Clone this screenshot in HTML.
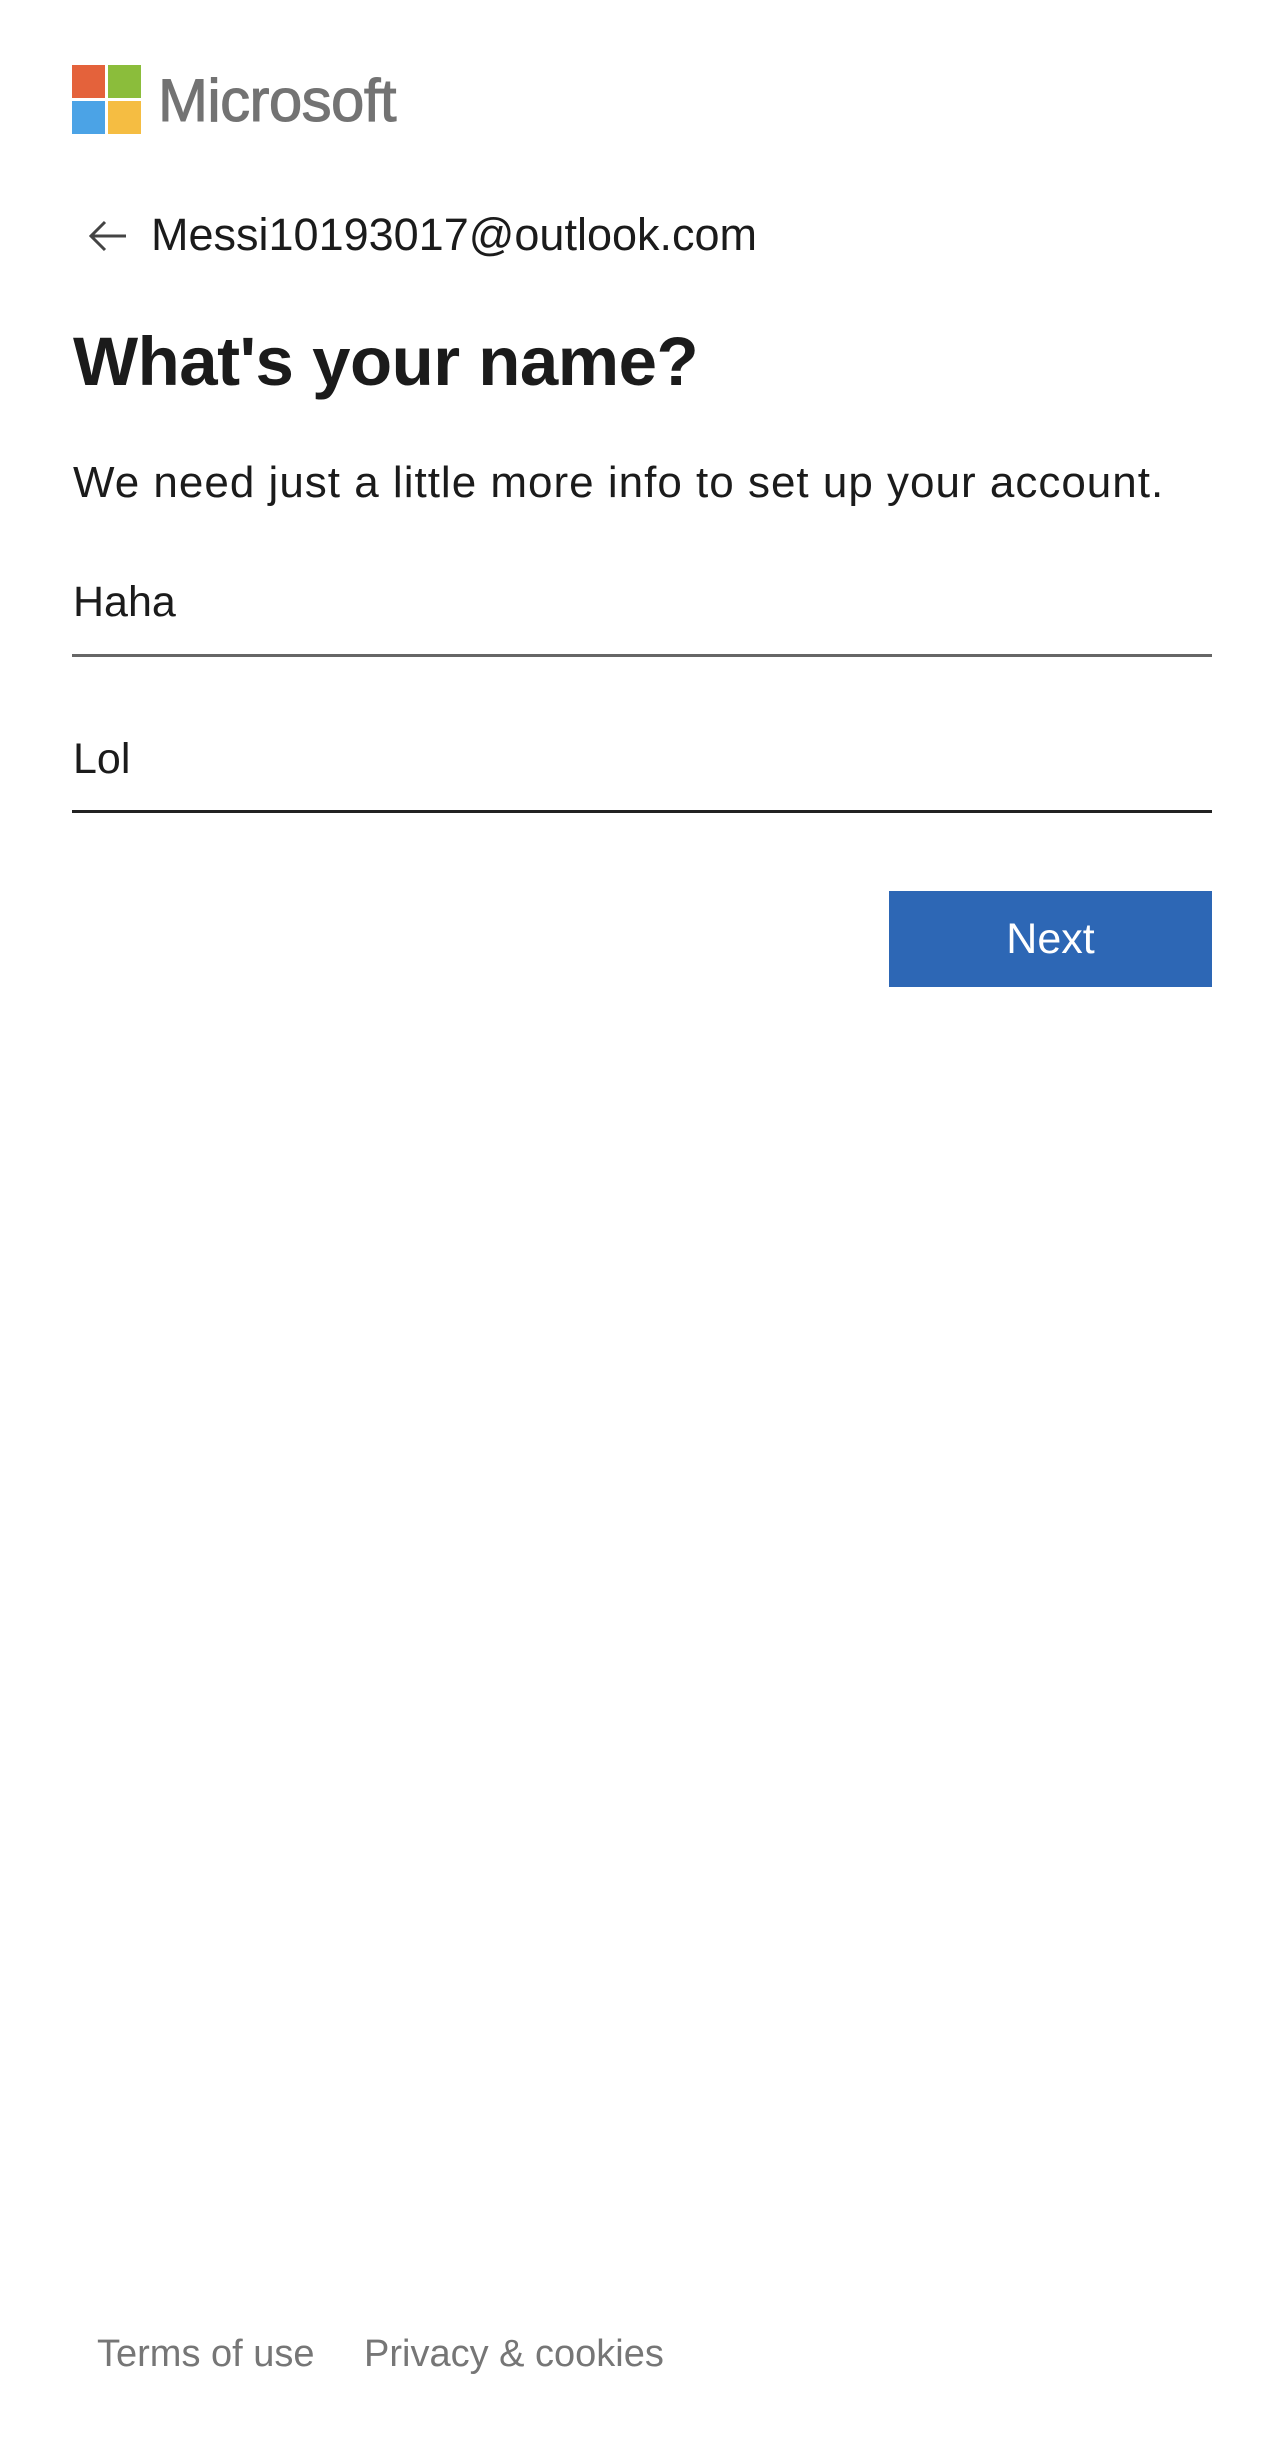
<!DOCTYPE html>
<html><head><meta charset="utf-8"><style>
html,body{margin:0;padding:0;background:#fff;width:1284px;height:2446px;overflow:hidden;font-family:"Liberation Sans",Arial,sans-serif;color:#1b1b1b}
.a{position:absolute;white-space:nowrap}
.sq{position:absolute;width:33px;height:33px}
</style></head><body>
<div class="sq" style="left:72px;top:65px;background:#e4623b"></div>
<div class="sq" style="left:108px;top:65px;background:#8bbd3b"></div>
<div class="sq" style="left:72px;top:101px;background:#4ba3e6"></div>
<div class="sq" style="left:108px;top:101px;background:#f5bd42"></div>
<div class="a" style="left:158px;top:66px;font-size:60px;line-height:70px;color:#737373;letter-spacing:-0.6px;-webkit-text-stroke:1px #737373">Microsoft</div>
<svg class="a" style="left:86px;top:218px" width="44" height="36" viewBox="0 0 44 36"><path d="M40 18H5M19 4L5 18l14 14" fill="none" stroke="#444" stroke-width="3"/></svg>
<div class="a" style="left:151px;top:210px;font-size:45px;line-height:50px">Messi10193017@outlook.com</div>
<div class="a" style="left:73px;top:322px;font-size:69px;line-height:80px;font-weight:bold;letter-spacing:-0.5px">What's your name?</div>
<div class="a" style="left:73px;top:455px;font-size:44px;line-height:55px;letter-spacing:1px">We need just a little more info to set up your account.</div>
<div class="a" style="left:73px;top:575px;font-size:43px;line-height:55px">Haha</div>
<div class="a" style="left:72px;top:654px;width:1140px;height:3px;background:#666"></div>
<div class="a" style="left:73px;top:732px;font-size:43px;line-height:55px">Lol</div>
<div class="a" style="left:72px;top:810px;width:1140px;height:3px;background:#222"></div>
<div class="a" style="left:889px;top:891px;width:323px;height:96px;background:#2d67b5;color:#fff;font-size:43px;line-height:96px;text-align:center">Next</div>
<div class="a" style="left:97px;top:2332px;font-size:38px;line-height:44px;color:#767676">Terms of use</div>
<div class="a" style="left:364px;top:2332px;font-size:38px;line-height:44px;color:#767676">Privacy &amp; cookies</div>
</body></html>
